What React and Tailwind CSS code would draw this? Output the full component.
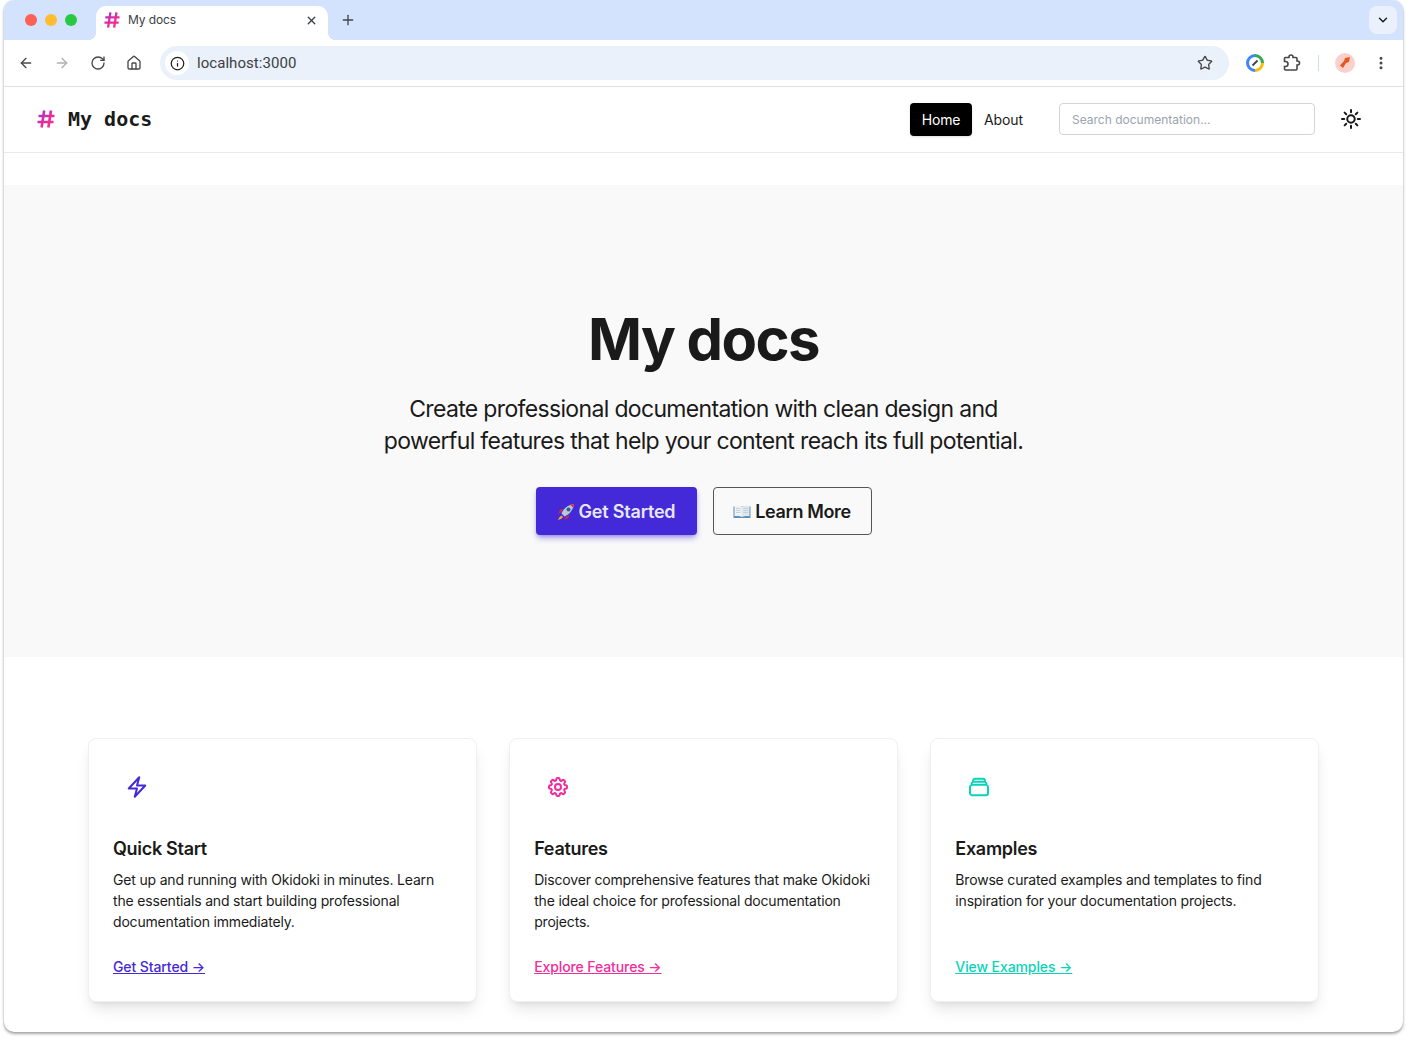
import { ArrowLeft, ArrowRight, RotateCw, Home, Info, Star, EllipsisVertical, ChevronDown, X, Plus } from 'lucide-react'
import { HiOutlineBolt, HiOutlineCog8Tooth, HiOutlineRectangleStack, HiOutlineSun } from 'react-icons/hi2'

const cards = [
  {
    title: 'Quick Start',
    text: 'Get up and running with Okidoki in minutes. Learn the essentials and start building professional documentation immediately.',
    link: 'Get Started →',
    Icon: HiOutlineBolt,
    color: 'text-[#4329d8]',
  },
  {
    title: 'Features',
    text: 'Discover comprehensive features that make Okidoki the ideal choice for professional documentation projects.',
    link: 'Explore Features →',
    Icon: HiOutlineCog8Tooth,
    color: 'text-[#f02d9c]',
  },
  {
    title: 'Examples',
    text: 'Browse curated examples and templates to find inspiration for your documentation projects.',
    link: 'View Examples →',
    Icon: HiOutlineRectangleStack,
    color: 'text-[#0bd3b8]',
  },
]

function HashLogo({ id, size }) {
  return (
    <svg width={size} height={size} viewBox="0 0 18 18" fill="none">
      <defs>
        <linearGradient id={id} x1="0" y1="0" x2="18" y2="18" gradientUnits="userSpaceOnUse">
          <stop offset="0" stopColor="#8e35d6" />
          <stop offset="0.5" stopColor="#e42c9f" />
          <stop offset="1" stopColor="#fb2d8a" />
        </linearGradient>
      </defs>
      <path
        d="M7.2 0.500 4.600 17.500M14 0.500 11.400 17.500M1.500 6h16M0.500 12h16"
        stroke={`url(#${id})`}
        strokeWidth="2.6"
      />
    </svg>
  )
}

function Rocket() {
  return (
    <svg width="18" height="18" viewBox="0 0 18 18" className="shrink-0">
      <path d="M4 9.500 1 11l2-4.500 3.500-.5zM8.500 14 7 17l4.500-2 .5-3.500z" fill="#c62f3a" />
      <path d="M4.500 12.500C2.500 13.500 1.800 15.500 1 17c1.800-.5 3.800-1.200 5-3z" fill="#f7a833" />
      <path d="M4.500 10.500C6.500 5.500 11 1.800 17 1c-.8 6-4.500 10.500-9.500 12.500z" fill="#b6c9dc" />
      <path d="M13 1.600 17 1l-.7 4z" fill="#d8343f" />
      <circle cx="11.500" cy="6.500" r="2" fill="#2f5f8e" />
    </svg>
  )
}

function Book() {
  return (
    <svg width="18" height="18" viewBox="0 0 18 18" className="shrink-0">
      <path d="M0.500 3.500h17v11.500h-17z" fill="#5f8fb4" />
      <path d="M1.500 3C4 2.500 7 2.500 9 3.800V14c-2-1-5-1.200-7.500-.8z" fill="#eef2f5" />
      <path d="M16.500 3C14 2.500 11 2.500 9 3.800V14c2-1 5-1.200 7.500-.8z" fill="#dfe6ec" />
      <path d="M3 5.500h4.500M3 7.500h4.500M3 9.500h4.500M10.500 5.500H15M10.500 7.500H15M10.500 9.500H15" stroke="#b8c4cf" strokeWidth="0.7" />
    </svg>
  )
}

function ChromeBar() {
  return (
    <>
      <div className="flex h-10 items-end bg-[#d3e3fd]">
        <div className="flex w-[92px] shrink-0 gap-2 self-center pl-[21px]">
          <span className="h-3 w-3 rounded-full bg-[#ff5f57]" />
          <span className="h-3 w-3 rounded-full bg-[#febc2e]" />
          <span className="h-3 w-3 rounded-full bg-[#28c840]" />
        </div>
        <div className="relative flex h-[34px] w-[232px] items-center rounded-t-[10px] bg-white pb-[6px] pl-2 pr-[10px]">
          <span className="absolute -left-2 bottom-0 h-2 w-2 bg-[radial-gradient(circle_at_0_0,transparent_8px,white_8px)]" />
          <span className="absolute -right-2 bottom-0 h-2 w-2 bg-[radial-gradient(circle_at_100%_0,transparent_8px,white_8px)]" />
          <HashLogo id="tabHash" size={16} />
          <span className="ml-2 flex-1 text-xs tracking-[-0.1px] text-[#3c4043]">My docs</span>
          <X size={13} strokeWidth={2.5} className="text-[#3c4043]" />
        </div>
        <Plus size={16} strokeWidth={2} className="mb-3 ml-3 text-[#444746]" />
        <div className="ml-auto mb-[6px] mr-[6px] flex h-7 w-7 items-center justify-center rounded-lg bg-[#eaf1fd]">
          <ChevronDown size={14} strokeWidth={2.5} className="text-[#1f1f1f]" />
        </div>
      </div>
      <div className="-mt-[10px] h-[10px] bg-[#d3e3fd]" />
      <div className="flex h-[47px] items-center rounded-t-[10px] border-b border-[#dfe1e5] bg-white pl-[14px] pr-[14px] text-[#474747]">
        <div className="flex w-[142px] shrink-0 items-center gap-[20px]">
          <ArrowLeft size={16} />
          <ArrowRight size={16} className="text-[#b0b0b0]" />
          <RotateCw size={16} />
          <Home size={16} />
        </div>
        <div className="flex h-[34px] w-[1069px] shrink-0 items-center rounded-full bg-[#ebf1fa] pl-[5px] pr-[16px]">
          <span className="flex h-6 w-6 items-center justify-center rounded-full bg-white">
            <Info size={15} className="text-[#1f1f1f]" />
          </span>
          <span className="ml-2 font-['Roboto',sans-serif] text-[15px] tracking-[0.05px] text-[#3c4043]">localhost:3000</span>
          <Star size={16} strokeWidth={2} className="ml-auto" />
        </div>
        <div className="flex items-center">
          <svg width="18" height="18" viewBox="0 0 18 18" className="ml-[17px]">
            <path d="M9 1.500A7.500 7.500 0 0 1 16.500 9" fill="none" stroke="#34a853" strokeWidth="3" />
            <path d="M16.500 9A7.500 7.500 0 0 1 9 16.500" fill="none" stroke="#fbbc04" strokeWidth="3" />
            <path d="M9 16.500A7.500 7.500 0 0 1 1.500 9 7.500 7.500 0 0 1 9 1.500" fill="none" stroke="#4285f4" strokeWidth="3" />
            <path d="M6.500 11.500 11.500 6.500" stroke="#3c4043" strokeWidth="1.800" />
          </svg>
          <svg width="18" height="18" viewBox="0 0 18 18" fill="none" stroke="currentColor" strokeWidth="1.600" className="ml-[19px]">
            <path d="M1.500 4.500a1 1 0 0 1 1-1H6V3a2 2 0 0 1 4 0v.5h3a1 1 0 0 1 1 1V7h.500a2 2 0 0 1 0 4H14v4a1 1 0 0 1-1 1H2.500a1 1 0 0 1-1-1V12.500h1a2.500 2.500 0 0 0 0-5h-1z" />
          </svg>
          <span className="ml-[17px] h-4 w-px bg-[#c7dafa]" />
          <span className="ml-4 flex h-5 w-5 items-center justify-center rounded-full bg-[#fbd0cc]">
            <svg width="14" height="14" viewBox="0 0 14 14">
              <path d="M2 9.500 6 5l1-3 5-1-1 5-3 1-3 5z" fill="#e4581b" />
            </svg>
          </span>
          <EllipsisVertical size={16} strokeWidth={2.5} className="ml-[18px]" />
        </div>
      </div>
    </>
  )
}

function SiteHeader() {
  return (
    <header className="flex h-[66px] items-center border-b border-[#eaeaea] bg-white pb-px pl-[33px] pr-[40px]">
      <HashLogo id="siteHash" size={18} />
      <span className="ml-[13px] font-['DejaVu_Sans_Mono',monospace] text-[20px] font-bold text-[#1a1a1a]">My docs</span>
      <nav className="ml-auto mt-px flex items-center gap-3 text-sm">
        <a href="#" className="flex h-[33px] w-[62px] items-center justify-center rounded bg-black tracking-[-0.2px] text-white shadow-sm">Home</a>
        <a href="#" className="tracking-[-0.1px] text-[#1a1a1a]">About</a>
      </nav>
      <input
        placeholder="Search documentation..."
        className="ml-9 h-8 w-64 rounded border border-[#d4d4d4] bg-white px-3 text-xs outline-none placeholder:text-[#9ca3af]"
      />
      <HiOutlineSun size={24} strokeWidth={2} className="ml-6 text-[#1a1a1a]" />
    </header>
  )
}

function Hero() {
  return (
    <section className="mt-8 flex h-[472px] flex-col items-center bg-[#f9f9f9] pt-[125px] text-[#1a1a1a]">
      <h1 className="text-[58px] font-bold leading-none tracking-[-1.6px]">My docs</h1>
      <p className="mt-[25px] text-center text-[23px] leading-8 tracking-[-0.66px]">
        Create professional documentation with clean design and<br />
        powerful features that help your content reach its full potential.
      </p>
      <div className="mt-[30px] flex gap-4">
        <a href="#" className="flex h-12 w-[161px] items-center justify-center gap-1 rounded bg-[#4329d8] pt-px text-lg font-semibold tracking-[-0.2px] text-[#e8e6fb] shadow-md shadow-[#4329d8]/40">
          <Rocket /> Get Started
        </a>
        <a href="#" className="flex h-12 w-[159px] items-center justify-center gap-1 rounded border border-[#555555] pt-px text-lg font-semibold tracking-[-0.35px]">
          <Book /> Learn More
        </a>
      </div>
    </section>
  )
}

function Card({ card }) {
  const { Icon } = card
  return (
    <div className="flex h-[264px] flex-col rounded-lg border border-[#f0f0f0] bg-white p-6 shadow-lg">
      <div className={`flex h-12 w-12 items-center justify-center ${card.color}`}>
        <Icon size={24} strokeWidth={2} />
      </div>
      <h3 className="mt-6 text-lg font-semibold leading-7 tracking-[-0.3px] text-[#1a1a1a]">{card.title}</h3>
      <p className="mt-[6px] text-sm leading-[21px] tracking-[-0.18px] text-[#1a1a1a]">{card.text}</p>
      <a href="#" className={`mt-auto text-sm font-medium leading-[21px] tracking-[-0.1px] underline ${card.color}`}>{card.link}</a>
    </div>
  )
}

export default function App() {
  return (
    <div className="h-[1040px] overflow-hidden bg-white font-['Inter',sans-serif]">
      <div className="mx-[4px] h-[1032px] w-[1399px] overflow-hidden rounded-[10px] bg-white shadow-[0_2px_3px_rgba(0,0,0,0.35),0_0_1px_rgba(0,0,0,0.25)]">
        <ChromeBar />
        <SiteHeader />
        <Hero />
        <section className="grid grid-cols-3 gap-[32.5px] px-[84px] pt-[81px]">
          {cards.map((card) => (
            <Card key={card.title} card={card} />
          ))}
        </section>
      </div>
    </div>
  )
}
